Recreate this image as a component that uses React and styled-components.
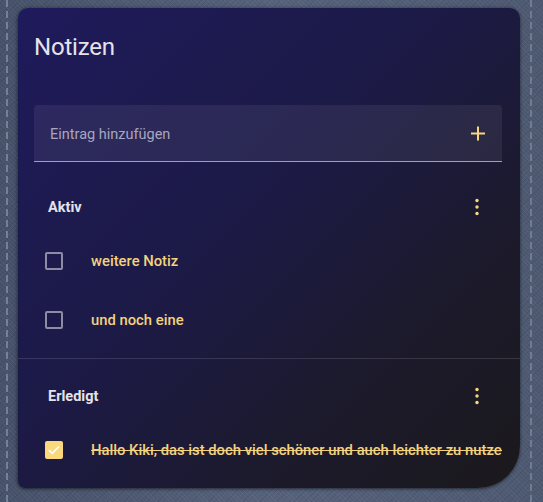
import React from "react";
import styled, { createGlobalStyle } from "styled-components";

const Global = createGlobalStyle`
  html, body { margin: 0; padding: 0; }
  body {
    width: 543px;
    height: 502px;
    overflow: hidden;
    font-family: Roboto, "Noto Sans", "Liberation Sans", sans-serif;
    background-color: #4f5b73;
    background-image:
      repeating-linear-gradient(to bottom, rgba(150,165,190,0.55) 0 7px, transparent 7px 11px),
      repeating-linear-gradient(to bottom, rgba(150,165,190,0.45) 0 7px, transparent 7px 11px),
      repeating-linear-gradient(45deg, rgba(255,255,255,0.04) 0 1px, transparent 1px 3px),
      repeating-linear-gradient(-45deg, rgba(0,0,0,0.06) 0 1px, transparent 1px 4px),
      linear-gradient(90deg, #46526a 0%, #56627b 50%, #4d5971 100%);
    background-size: 2px 100%, 2px 100%, auto, auto, auto;
    background-position: 6px 0, 530px 0, 0 0, 0 0, 0 0;
    background-repeat: no-repeat, no-repeat, repeat, repeat, no-repeat;
  }
  #root { display: block; }
`;

const Card = styled.div`
  box-sizing: border-box;
  margin: 8px 0 0 18px;
  width: 502px;
  height: 480px;
  border-radius: 10px 10px 42px 7px;
  background: linear-gradient(135deg, #1f1a5c 0%, #1c1a45 45%, #1c1a2a 75%, #1b191c 100%);
  box-shadow: 0 1px 3px rgba(0, 0, 0, 0.45), -1px 0 4px rgba(0, 0, 0, 0.25);
  overflow: hidden;
  display: flex;
  flex-direction: column;
`;

const Title = styled.h1`
  margin: 0;
  padding: 15px 16px 0 16px;
  font-size: 24px;
  line-height: 48px;
  font-weight: 400;
  color: #e4e3ea;
  letter-spacing: -0.2px;
`;

const Field = styled.div`
  margin: 34px 18px 0 16px;
  height: 56px;
  display: flex;
  align-items: center;
  justify-content: space-between;
  padding: 0 12px 0 16px;
  border-radius: 4px 4px 0 0;
  background: rgba(255, 255, 255, 0.065);
  border-bottom: 1px solid #a19fb7;
`;

const Placeholder = styled.span`
  font-size: 14.5px;
  color: #a8a6bf;
  padding-top: 2px;
`;

const IconBox = styled.span`
  width: 24px;
  height: 24px;
  display: flex;
  align-items: center;
  justify-content: center;
  color: #f6d77f;
`;

const Section = styled.div`
  display: flex;
  flex-direction: column;
  padding-bottom: ${(p) => p.$pb || 0}px;
  border-bottom: ${(p) => (p.$divider ? "1px solid rgba(255,255,255,0.12)" : "none")};
  margin-top: ${(p) => p.$mt || 0}px;
`;

const SectionHeader = styled.div`
  height: 48px;
  display: flex;
  align-items: center;
  justify-content: space-between;
  padding: 0 31px 0 30px;
`;

const SectionTitle = styled.span`
  font-size: 14.5px;
  font-weight: 700;
  color: #e3e2eb;
`;

const Row = styled.div`
  height: 59px;
  display: flex;
  align-items: center;
  gap: 28px;
  padding: 0 18px 0 27px;
  overflow: hidden;
`;

const Box = styled.span`
  flex: none;
  box-sizing: border-box;
  width: 18px;
  height: 18px;
  border-radius: 2px;
  border: 2px solid ${(p) => (p.$checked ? "#fcd87c" : "#8e8ba5")};
  background: ${(p) => (p.$checked ? "#fcd87c" : "transparent")};
  display: flex;
  align-items: center;
  justify-content: center;
`;

const ItemText = styled.span`
  font-size: 14.8px;
  font-weight: 500;
  color: #f2d27f;
  white-space: nowrap;
  overflow: hidden;
  text-overflow: clip;
  min-width: 0;
  flex: 1;
  text-decoration: ${(p) => (p.$done ? "line-through" : "none")};
  text-decoration-thickness: 1px;
  padding-top: 1px;
`;

const Plus = () => (
  <svg width="25" height="25" viewBox="0 0 24 24" fill="currentColor">
    <path d="M19,13H13V19H11V13H5V11H11V5H13V11H19V13Z" />
  </svg>
);

const Dots = () => (
  <IconBox>
    <svg width="24" height="24" viewBox="0 0 24 24" fill="currentColor">
      <circle cx="12" cy="5.5" r="1.7" />
      <circle cx="12" cy="12" r="1.7" />
      <circle cx="12" cy="18.5" r="1.7" />
    </svg>
  </IconBox>
);

const Check = () => (
  <svg width="14" height="14" viewBox="0 0 14 14" fill="none">
    <path d="M2 7.2 L5.2 10.3 L12 3.5" stroke="#ffffff" strokeWidth="1.7" />
  </svg>
);

const Item = ({ text, done }) => (
  <Row>
    <Box $checked={done}>{done && <Check />}</Box>
    <ItemText $done={done}>{text}</ItemText>
  </Row>
);

export default function App() {
  return (
    <>
      <Global />
      <Card>
        <Title>Notizen</Title>
        <Field>
          <Placeholder>Eintrag hinzufügen</Placeholder>
          <IconBox>
            <Plus />
          </IconBox>
        </Field>
        <Section $mt={21} $pb={9} $divider>
          <SectionHeader>
            <SectionTitle>Aktiv</SectionTitle>
            <Dots />
          </SectionHeader>
          <Item text="weitere Notiz" />
          <Item text="und noch eine" />
        </Section>
        <Section $mt={13}>
          <SectionHeader>
            <SectionTitle>Erledigt</SectionTitle>
            <Dots />
          </SectionHeader>
          <Item done text="Hallo Kiki, das ist doch viel schöner und auch leichter zu nutzen" />
        </Section>
      </Card>
    </>
  );
}
